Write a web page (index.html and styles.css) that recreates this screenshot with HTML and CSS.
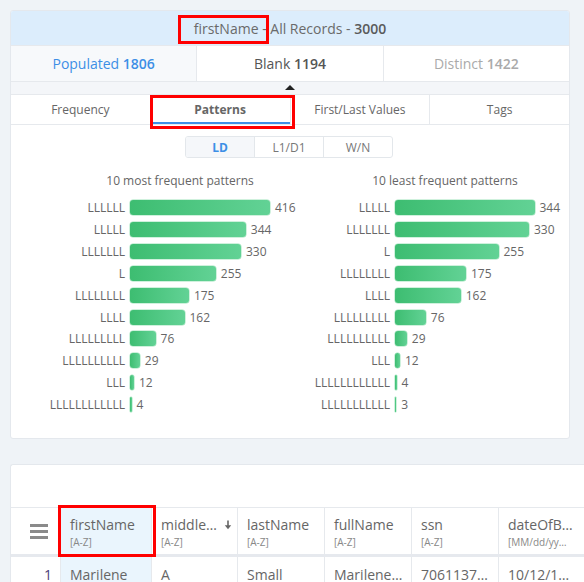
FILE: index.html
```html
<!DOCTYPE html>
<html>
<head>
<meta charset="utf-8">
<link rel="stylesheet" href="styles.css">
</head>
<body>
<div class="page">
  <div class="card profile">
    <div class="card-head"><span>firstName - All Records - <b>3000</b></span></div>
    <div class="stats">
      <div class="stat populated"><span>Populated <b>1806</b></span></div>
      <div class="stat blank"><span>Blank <b>1194</b></span></div>
      <div class="stat distinct"><span>Distinct <b>1422</b></span></div>
    </div>
    <div class="pointer-row"><span class="pointer"></span></div>
    <div class="tabs">
      <div class="tab">Frequency</div>
      <div class="tab active">Patterns</div>
      <div class="tab">First/Last Values</div>
      <div class="tab">Tags</div>
    </div>
    <div class="tab-body">
      <div class="toggle">
        <div class="seg on">LD</div>
        <div class="seg">L1/D1</div>
        <div class="seg">W/N</div>
      </div>
      <div class="charts">
        <div class="chart">
          <div class="chart-title">10 most frequent patterns</div>
          <div class="rows">
            <div class="lbl">LLLLLL</div><div class="barcell"><div class="bar" style="width:140px"></div><span class="val">416</span></div>
            <div class="lbl">LLLLL</div><div class="barcell"><div class="bar" style="width:115.8px"></div><span class="val">344</span></div>
            <div class="lbl">LLLLLLL</div><div class="barcell"><div class="bar" style="width:111px"></div><span class="val">330</span></div>
            <div class="lbl">L</div><div class="barcell"><div class="bar" style="width:85.8px"></div><span class="val">255</span></div>
            <div class="lbl">LLLLLLLL</div><div class="barcell"><div class="bar" style="width:58.9px"></div><span class="val">175</span></div>
            <div class="lbl">LLLL</div><div class="barcell"><div class="bar" style="width:54.5px"></div><span class="val">162</span></div>
            <div class="lbl">LLLLLLLLL</div><div class="barcell"><div class="bar" style="width:25.6px"></div><span class="val">76</span></div>
            <div class="lbl">LLLLLLLLLL</div><div class="barcell"><div class="bar" style="width:9.8px"></div><span class="val">29</span></div>
            <div class="lbl">LLL</div><div class="barcell"><div class="bar" style="width:4px"></div><span class="val">12</span></div>
            <div class="lbl">LLLLLLLLLLLL</div><div class="barcell"><div class="bar thin" style="width:1.5px"></div><span class="val">4</span></div>
          </div>
        </div>
        <div class="chart">
          <div class="chart-title">10 least frequent patterns</div>
          <div class="rows">
            <div class="lbl">LLLLL</div><div class="barcell"><div class="bar" style="width:139.5px"></div><span class="val">344</span></div>
            <div class="lbl">LLLLLLL</div><div class="barcell"><div class="bar" style="width:134px"></div><span class="val">330</span></div>
            <div class="lbl">L</div><div class="barcell"><div class="bar" style="width:103.5px"></div><span class="val">255</span></div>
            <div class="lbl">LLLLLLLL</div><div class="barcell"><div class="bar" style="width:71px"></div><span class="val">175</span></div>
            <div class="lbl">LLLL</div><div class="barcell"><div class="bar" style="width:65.7px"></div><span class="val">162</span></div>
            <div class="lbl">LLLLLLLLL</div><div class="barcell"><div class="bar" style="width:30.8px"></div><span class="val">76</span></div>
            <div class="lbl">LLLLLLLLLL</div><div class="barcell"><div class="bar" style="width:11.8px"></div><span class="val">29</span></div>
            <div class="lbl">LLL</div><div class="barcell"><div class="bar" style="width:4.9px"></div><span class="val">12</span></div>
            <div class="lbl">LLLLLLLLLLLL</div><div class="barcell"><div class="bar thin" style="width:1.6px"></div><span class="val">4</span></div>
            <div class="lbl">LLLLLLLLLLL</div><div class="barcell"><div class="bar thin" style="width:1.3px"></div><span class="val">3</span></div>
          </div>
        </div>
      </div>
    </div>
  </div>

  <div class="card grid-card">
    <div class="grid-top"></div>
    <div class="grid-head">
      <div class="gcell menu-cell">
        <svg width="18" height="16" viewBox="0 0 18 16"><rect x="0" y="1" width="18" height="3" fill="#8a8a8a"/><rect x="0" y="7" width="18" height="3" fill="#8a8a8a"/><rect x="0" y="13" width="18" height="3" fill="#8a8a8a"/></svg>
      </div>
      <div class="gcell c1 sel"><div class="hname">firstName</div><div class="htype">[A-Z]</div></div>
      <div class="gcell c2"><div class="hline"><span class="hname">middle…</span><svg class="sort" width="8" height="10" viewBox="0 0 8 10"><path d="M4 0.5V7" stroke="#666" stroke-width="1.6"/><path d="M0.8 5.2L4 9.2L7.2 5.2Z" fill="#666"/></svg></div><div class="htype">[A-Z]</div></div>
      <div class="gcell c3"><div class="hname">lastName</div><div class="htype">[A-Z]</div></div>
      <div class="gcell c4"><div class="hname">fullName</div><div class="htype">[A-Z]</div></div>
      <div class="gcell c5"><div class="hname">ssn</div><div class="htype">[A-Z]</div></div>
      <div class="gcell c6"><div class="hname">dateOfB…</div><div class="htype">[MM/dd/yy…</div></div>
    </div>
    <div class="grid-row">
      <div class="dcell menu-cell num">1</div>
      <div class="dcell c1 sel">Marilene</div>
      <div class="dcell c2">A</div>
      <div class="dcell c3">Small</div>
      <div class="dcell c4">Marilene…</div>
      <div class="dcell c5">7061137…</div>
      <div class="dcell c6">10/12/1…</div>
    </div>
  </div>

  <div class="mark mark-title"></div>
  <div class="mark mark-tab"></div>
  <div class="mark mark-col"></div>
</div>
</body>
</html>
```

FILE: styles.css
```css
html, body {
  margin: 0;
  padding: 0;
  background: #eff3f7;
  font-family: "Open Sans", "Noto Sans", sans-serif;
  color: #666;
  overflow: hidden;
}
.page {
  position: relative;
  width: 584px;
  height: 582px;
  padding: 10px 0 0 10px;
  box-sizing: border-box;
}
.card {
  background: #fff;
  border: 1px solid #e4e8ed;
  border-radius: 3px;
  box-sizing: border-box;
}
.profile {
  width: 560px;
  height: 429px;
  overflow: hidden;
}
.card-head {
  height: 34px;
  background: #dcedfc;
  display: flex;
  align-items: center;
  justify-content: center;
  font-size: 14px;
  color: #6a6a6a;
}
.card-head b { font-weight: 600; color: #5a5a5a; }
.stats {
  display: flex;
  height: 35px;
  border-top: 1px solid #e6e9ed;
  border-bottom: 1px solid #e6e9ed;
}
.stat {
  flex: 1;
  display: flex;
  align-items: center;
  justify-content: center;
  font-size: 14px;
  border-left: 1px solid #e6e9ed;
}
.stat:first-child { border-left: 0; }
.stat b { font-weight: 600; }
.populated { background: #f7f9fb; color: #3d8fe6; }
.blank { color: #555; }
.distinct { color: #aaa; }
.pointer-row {
  height: 12px;
  background: #f4f6f9;
  display: flex;
  justify-content: center;
  align-items: flex-end;
}
.pointer {
  width: 0;
  height: 0;
  border-left: 5px solid transparent;
  border-right: 5px solid transparent;
  border-bottom: 5px solid #222;
  margin-bottom: 4px;
}
.tabs {
  display: flex;
  height: 29px;
  border-top: 1px solid #e6e9ed;
  border-bottom: 1px solid #e6e9ed;
}
.tab {
  flex: 1;
  display: flex;
  align-items: center;
  justify-content: center;
  font-size: 12px;
  color: #666;
  border-left: 1px solid #e6e9ed;
  box-sizing: border-box;
}
.tab:first-child { border-left: 0; }
.tab.active {
  font-weight: 700;
  color: #666;
  border-bottom: 2px solid #3d8fe6;
  padding-top: 2px;
}
.tab-body {
  padding-top: 11px;
}
.toggle {
  display: flex;
  width: 208px;
  height: 22px;
  margin-left: 174px;
  border: 1px solid #e3e7eb;
  border-radius: 3px;
  box-sizing: border-box;
  overflow: hidden;
}
.seg {
  flex: 1;
  display: flex;
  align-items: center;
  justify-content: center;
  font-size: 12px;
  color: #777;
  border-left: 1px solid #e3e7eb;
}
.seg:first-child { border-left: 0; }
.seg.on { background: #f5f7fa; color: #3d8fe6; font-weight: 700; }
.charts {
  display: flex;
  gap: 5px;
  padding-left: 39px;
  margin-top: 15px;
}
.chart { width: 260px; flex: none; }
.chart-title {
  text-align: center;
  font-size: 12px;
  line-height: 16px;
  color: #666;
}
.rows {
  display: grid;
  grid-template-columns: 75px 1fr;
  column-gap: 5px;
  grid-auto-rows: 21.85px;
  margin-top: 8px;
}
.lbl {
  text-align: right;
  font-size: 12px;
  color: #666;
  display: flex;
  align-items: center;
  justify-content: flex-end;
  white-space: nowrap;
}
.barcell {
  display: flex;
  align-items: center;
}
.bar {
  height: 15px;
  border-radius: 3px;
  background: linear-gradient(to right, #3dbd71, #62d295);
  box-shadow: 0 0 0 0.5px rgba(120, 215, 160, 0.7);
  flex: none;
}
.bar.thin { border-radius: 1px; }
.val {
  margin-left: 5px;
  font-size: 12px;
  color: #666;
}
.grid-card {
  margin-top: 25px;
  width: 600px;
  height: 130px;
  border-right: 0;
  overflow: hidden;
}
.grid-top { height: 42px; }
.grid-head {
  display: flex;
  height: 46px;
  border-top: 1px solid #e6e9ed;
  border-bottom: 3px solid #e6e9ee;
}
.grid-row {
  display: flex;
  height: 34px;
}
.gcell, .dcell {
  flex: none;
  box-sizing: border-box;
  border-left: 1px solid #e6e9ed;
}
.menu-cell { width: 49px; border-left: 0; }
.c1 { width: 91px; }
.c2 { width: 86px; }
.c3 { width: 87px; }
.c4 { width: 87px; }
.c5 { width: 87px; }
.c6 { width: 110px; }
.sel { background: #eaf5fd; }
.gcell {
  padding: 7px 8px 0 9px;
}
.gcell.menu-cell {
  padding: 0;
  display: flex;
  align-items: center;
  justify-content: center;
  padding-left: 6px;
}
.hname {
  font-size: 14px;
  line-height: 19px;
  color: #666;
  white-space: nowrap;
}
.hline {
  display: flex;
  justify-content: space-between;
  align-items: center;
}
.sort { margin-right: -3px; }
.htype {
  font-size: 10px;
  line-height: 15px;
  margin-top: 1px;
  color: #888;
  white-space: nowrap;
}
.dcell {
  display: flex;
  align-items: center;
  padding-left: 9px;
  font-size: 14px;
  color: #666;
  white-space: nowrap;
}
.dcell.num {
  justify-content: flex-end;
  padding: 0 8px 0 0;
  color: #4a3f7a;
}
.mark {
  position: absolute;
  border: 3px solid #f00;
  box-sizing: border-box;
}
.mark-title { left: 178px; top: 15px; width: 91px; height: 29px; }
.mark-tab { left: 150px; top: 95px; width: 145px; height: 34px; }
.mark-col { left: 58px; top: 505px; width: 98px; height: 52px; }
```
